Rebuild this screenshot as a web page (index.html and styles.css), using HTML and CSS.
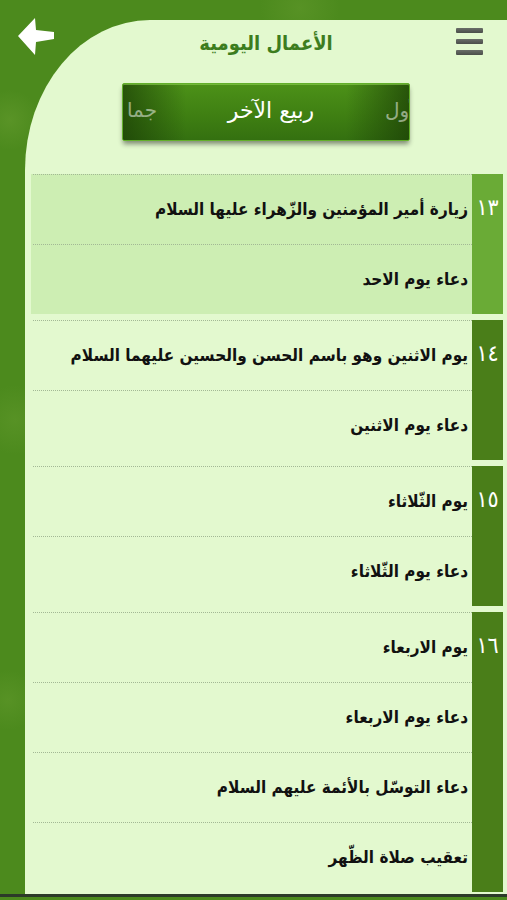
FILE: index.html
```html
<!DOCTYPE html>
<html lang="ar" dir="rtl">
<head>
    <meta charset="UTF-8">
    <meta name="viewport" content="width=device-width, initial-scale=1.0">
    <title>الأعمال اليومية</title>
    <link rel="stylesheet" href="styles.css">
</head>
<body>
    <div class="screen">
        <!-- Back button sits over the green corner -->
        <a class="back-btn" href="#">
            <svg width="40" height="40" viewBox="0 0 40 40">
                <polygon points="1,18 18,0 19,12 37,14 37,21 19,24 18,37" fill="#ffffff"/>
            </svg>
        </a>

        <div class="panel">
            <div class="header">
                <div class="menu-btn">
                    <span></span>
                    <span></span>
                    <span></span>
                </div>
                <h1 class="title">الأعمال اليومية</h1>
            </div>

            <div class="month-picker">
                <span class="month prev">ربيع الأول</span>
                <span class="month current">ربيع الآخر</span>
                <span class="month next">جمادى الأولى</span>
            </div>

            <div class="days">
                <div class="day active">
                    <div class="day-num"><span>١٣</span></div>
                    <div class="day-rows">
                        <div class="row">زيارة أمير المؤمنين والزّهراء  عليها السلام</div>
                        <div class="row">دعاء يوم الاحد</div>
                    </div>
                </div>

                <div class="day">
                    <div class="day-num"><span>١٤</span></div>
                    <div class="day-rows">
                        <div class="row">يوم الاثنين وهو باسم الحسن والحسين  عليهما السلام</div>
                        <div class="row">دعاء يوم الاثنين</div>
                    </div>
                </div>

                <div class="day">
                    <div class="day-num"><span>١٥</span></div>
                    <div class="day-rows">
                        <div class="row">يوم الثّلاثاء</div>
                        <div class="row">دعاء يوم الثّلاثاء</div>
                    </div>
                </div>

                <div class="day">
                    <div class="day-num"><span>١٦</span></div>
                    <div class="day-rows">
                        <div class="row">يوم الاربعاء</div>
                        <div class="row">دعاء يوم الاربعاء</div>
                        <div class="row">دعاء التوسّل بالأئمة عليهم السلام</div>
                        <div class="row">تعقيب صلاة الظّهر</div>
                    </div>
                </div>
            </div>
        </div>
    </div>
</body>
</html>
```

FILE: styles.css
```css
html, body {
    margin: 0;
    padding: 0;
}

body {
    width: 507px;
    height: 900px;
    overflow: hidden;
    background-color: #4c8a1d;
    background-image:
        radial-gradient(circle at 10px 120px, rgba(120, 170, 60, 0.3), transparent 30px),
        radial-gradient(circle at 15px 420px, rgba(120, 170, 60, 0.25), transparent 35px),
        radial-gradient(circle at 8px 700px, rgba(120, 170, 60, 0.25), transparent 30px),
        radial-gradient(circle at 300px 8px, rgba(120, 170, 60, 0.25), transparent 40px);
    font-family: "DejaVu Sans Condensed", "DejaVu Sans", sans-serif;
}

.screen {
    position: relative;
    height: 897px;
    padding-top: 20px;
    box-sizing: border-box;
    border-bottom: 3px solid #2c3a28;
}

.back-btn {
    position: absolute;
    left: 17px;
    top: 18px;
    display: block;
    width: 40px;
    height: 40px;
}

.panel {
    margin-left: 25px;
    height: 100%;
    background-color: #e3f9cf;
    border-top-left-radius: 125px 150px;
    display: flex;
    flex-direction: column;
}

/* Header */
.header {
    position: relative;
    height: 46px;
    display: flex;
    align-items: center;
    justify-content: center;
}

.title {
    margin: 0;
    font-size: 20px;
    font-weight: bold;
    color: #3c7d1e;
}

.menu-btn {
    position: absolute;
    right: 24px;
    top: 8px;
    width: 27px;
    display: flex;
    flex-direction: column;
    gap: 6px;
}

.menu-btn span {
    display: block;
    height: 5px;
    background: linear-gradient(#6a6e69, #4a4e49);
    border-radius: 1px;
}

/* Month picker */
.month-picker {
    align-self: center;
    margin-top: 17px;
    width: 286px;
    height: 56px;
    display: flex;
    align-items: center;
    justify-content: space-between;
    overflow: hidden;
    border: 1px solid #63b02b;
    border-radius: 2px;
    background:
        linear-gradient(to right, rgba(25, 60, 5, 0.7), rgba(25, 60, 5, 0) 22%, rgba(25, 60, 5, 0) 78%, rgba(25, 60, 5, 0.7)),
        linear-gradient(#4c9118, #3e7e12 60%, #347010);
    box-shadow: 0 4px 5px -1px rgba(0, 0, 0, 0.45), inset 0 1px 0 rgba(140, 210, 80, 0.6);
    white-space: nowrap;
    color: #ffffff;
}

.month {
    font-family: "DejaVu Sans", sans-serif;
    font-size: 20px;
    padding-bottom: 4px;
}

.month.current {
    flex: none;
    font-size: 22px;
}

/* neighbouring months peek in from the edges */
.month.prev,
.month.next {
    flex: 0 0 24px;
    overflow: hidden;
    opacity: 0.5;
}

.month.prev {
    direction: ltr;
    text-align: left;
}

.month.next {
    direction: rtl;
    text-align: right;
    flex-basis: 30px;
    margin-left: 4px;
}

/* Days list */
.days {
    margin-top: 33px;
    padding: 0 4px 0 6px;
    display: flex;
    flex-direction: column;
    gap: 6px;
}

.day {
    display: flex;
}

.day.active {
    background-color: #cdeeb3;
}

.day-num {
    flex: 0 0 31px;
    background-color: #4a7e19;
    color: #ffffff;
    font-size: 23px;
}

.day.active .day-num {
    background-color: #6aab36;
}

.day-num span {
    display: flex;
    height: 70px;
    align-items: center;
    justify-content: center;
    padding-bottom: 4px;
    box-sizing: border-box;
}

.day-rows {
    flex: 1;
    margin-left: 2px;
}

.row {
    height: 70px;
    box-sizing: border-box;
    border-top: 1px dotted #a3b895;
    display: flex;
    align-items: center;
    padding: 0 4px 2px 0;
    font-size: 17px;
    font-weight: bold;
    color: #111111;
    white-space: nowrap;
}
```
